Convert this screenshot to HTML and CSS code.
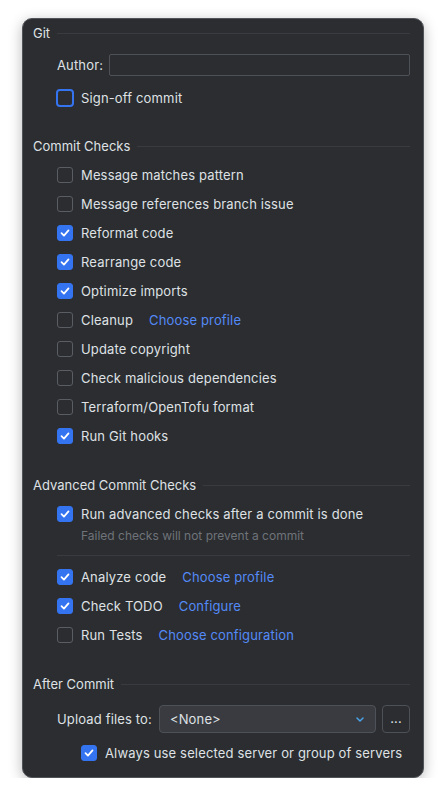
FILE: index.html
```html
<!DOCTYPE html>
<html>
<head>
<meta charset="utf-8">
<link rel="stylesheet" href="styles.css">
</head>
<body>
<div class="panel">
  <div class="title title-first"><span>Git</span><div class="rule"></div></div>
  <div class="indent author-row">
    <span class="label">Author:</span>
    <div class="input"></div>
  </div>
  <div class="indent row row-tight">
    <span class="cb focus"></span><span class="text">Sign-off commit</span>
  </div>

  <div class="title"><span>Commit Checks</span><div class="rule"></div></div>
  <div class="indent list">
    <div class="row"><span class="cb"></span><span class="text">Message matches pattern</span></div>
    <div class="row"><span class="cb"></span><span class="text">Message references branch issue</span></div>
    <div class="row"><span class="cb on"><svg viewBox="0 0 16 16"><path d="M4 8.2 L6.8 11 L12 5"/></svg></span><span class="text">Reformat code</span></div>
    <div class="row"><span class="cb on"><svg viewBox="0 0 16 16"><path d="M4 8.2 L6.8 11 L12 5"/></svg></span><span class="text">Rearrange code</span></div>
    <div class="row"><span class="cb on"><svg viewBox="0 0 16 16"><path d="M4 8.2 L6.8 11 L12 5"/></svg></span><span class="text">Optimize imports</span></div>
    <div class="row"><span class="cb"></span><span class="text">Cleanup</span><span class="link">Choose profile</span></div>
    <div class="row"><span class="cb"></span><span class="text">Update copyright</span></div>
    <div class="row"><span class="cb"></span><span class="text">Check malicious dependencies</span></div>
    <div class="row"><span class="cb"></span><span class="text">Terraform/OpenTofu format</span></div>
    <div class="row"><span class="cb on"><svg viewBox="0 0 16 16"><path d="M4 8.2 L6.8 11 L12 5"/></svg></span><span class="text">Run Git hooks</span></div>
  </div>

  <div class="title title-gap"><span>Advanced Commit Checks</span><div class="rule"></div></div>
  <div class="indent list">
    <div class="row"><span class="cb on"><svg viewBox="0 0 16 16"><path d="M4 8.2 L6.8 11 L12 5"/></svg></span><span class="text">Run advanced checks after a commit is done</span></div>
    <div class="hint">Failed checks will not prevent a commit</div>
    <div class="sep"></div>
    <div class="list2">
      <div class="row"><span class="cb on"><svg viewBox="0 0 16 16"><path d="M4 8.2 L6.8 11 L12 5"/></svg></span><span class="text">Analyze code</span><span class="link">Choose profile</span></div>
      <div class="row"><span class="cb on"><svg viewBox="0 0 16 16"><path d="M4 8.2 L6.8 11 L12 5"/></svg></span><span class="text">Check TODO</span><span class="link">Configure</span></div>
      <div class="row"><span class="cb"></span><span class="text">Run Tests</span><span class="link">Choose configuration</span></div>
    </div>
  </div>

  <div class="title title-gap"><span>After Commit</span><div class="rule"></div></div>
  <div class="indent upload-row">
    <span class="label">Upload files to:</span>
    <div class="combo">
      <span>&lt;None&gt;</span>
      <svg class="chev" viewBox="0 0 8 5"><path d="M1 1 L4 4 L7 1"/></svg>
    </div>
    <div class="dots">...</div>
  </div>
  <div class="indent2 row row-always">
    <span class="cb on"><svg viewBox="0 0 16 16"><path d="M4 8.2 L6.8 11 L12 5"/></svg></span><span class="text">Always use selected server or group of servers</span>
  </div>
</div>
</body>
</html>
```

FILE: styles.css
```css
html, body {
  margin: 0;
  padding: 0;
  background: #ffffff;
}
body {
  font-family: Inter, "Noto Sans", sans-serif;
  font-size: 13px;
  color: #dfe1e5;
  padding: 18px 0 0 22px;
}
.panel {
  box-sizing: border-box;
  width: 402px;
  height: 760px;
  background: #2b2d30;
  border: 1px solid #505358;
  border-radius: 10px;
  box-shadow: 0 3px 14px rgba(0, 0, 0, 0.28);
  padding: 4px 13px 0 10px;
  display: flex;
  flex-direction: column;
}
.title {
  display: flex;
  align-items: center;
  height: 20px;
  line-height: 20px;
  margin-top: 24px;
  white-space: nowrap;
}
.title-first { margin-top: 0; }
.title-gap { margin-top: 25px; }
.title .rule {
  flex: 1;
  height: 1px;
  background: #393b40;
  margin-left: 7px;
}
.indent { margin-left: 24px; }
.indent2 { margin-left: 48px; }
.author-row {
  display: flex;
  align-items: center;
  margin-top: 11px;
  height: 22px;
  letter-spacing: 0.15px;
}
.label { margin-right: 6px; white-space: nowrap; }
.input {
  flex: 1;
  box-sizing: border-box;
  height: 22px;
  border: 1px solid #4e5157;
  border-radius: 2px;
  background: #2b2d30;
}
.row {
  display: flex;
  align-items: center;
  height: 29px;
  white-space: nowrap;
  letter-spacing: 0.15px;
}
.row-tight { margin-top: 7px; }
.list { margin-top: 4px; display: flex; flex-direction: column; }
.cb {
  box-sizing: border-box;
  width: 16px;
  height: 16px;
  border: 1px solid #5a5d63;
  border-radius: 3px;
  margin-right: 8px;
  flex: none;
  display: flex;
  align-items: center;
  justify-content: center;
}
.cb.focus {
  border: 2px solid #3574f0;
  width: 18px;
  height: 18px;
  margin-left: -1px;
  margin-right: 7px;
  border-radius: 4px;
}
.cb.on {
  background: #3574f0;
  border-color: #3574f0;
}
.cb svg {
  width: 16px;
  height: 16px;
}
.cb svg path {
  fill: none;
  stroke: #ffffff;
  stroke-width: 2;
  stroke-linecap: round;
  stroke-linejoin: round;
}
.link {
  color: #548af7;
  margin-left: 16px;
}
.hint {
  margin-left: 24px;
  height: 16px;
  line-height: 16px;
  font-size: 12px;
  color: #6f737a;
}
.sep {
  height: 1px;
  background: #393b40;
  margin-top: 11px;
}
.list2 { margin-top: 6px; }
.upload-row {
  display: flex;
  align-items: center;
  margin-top: 11px;
  height: 28px;
  letter-spacing: 0.15px;
}
.upload-row .label { margin-right: 7px; }
.combo {
  flex: 1;
  box-sizing: border-box;
  height: 28px;
  border: 1px solid #4e5157;
  border-radius: 4px;
  background: #393b40;
  display: flex;
  align-items: center;
  justify-content: space-between;
  padding: 0 11px 0 10px;
}
.chev {
  width: 8px;
  height: 5px;
}
.chev path {
  fill: none;
  stroke: #4aa3e6;
  stroke-width: 1.5;
  stroke-linecap: round;
  stroke-linejoin: round;
}
.dots {
  box-sizing: border-box;
  width: 28px;
  height: 28px;
  margin-left: 6px;
  border: 1px solid #4e5157;
  border-radius: 4px;
  display: flex;
  align-items: center;
  justify-content: center;
  line-height: 1;
  padding-bottom: 2px;
}
.row-always { margin-top: 5px; }
```
